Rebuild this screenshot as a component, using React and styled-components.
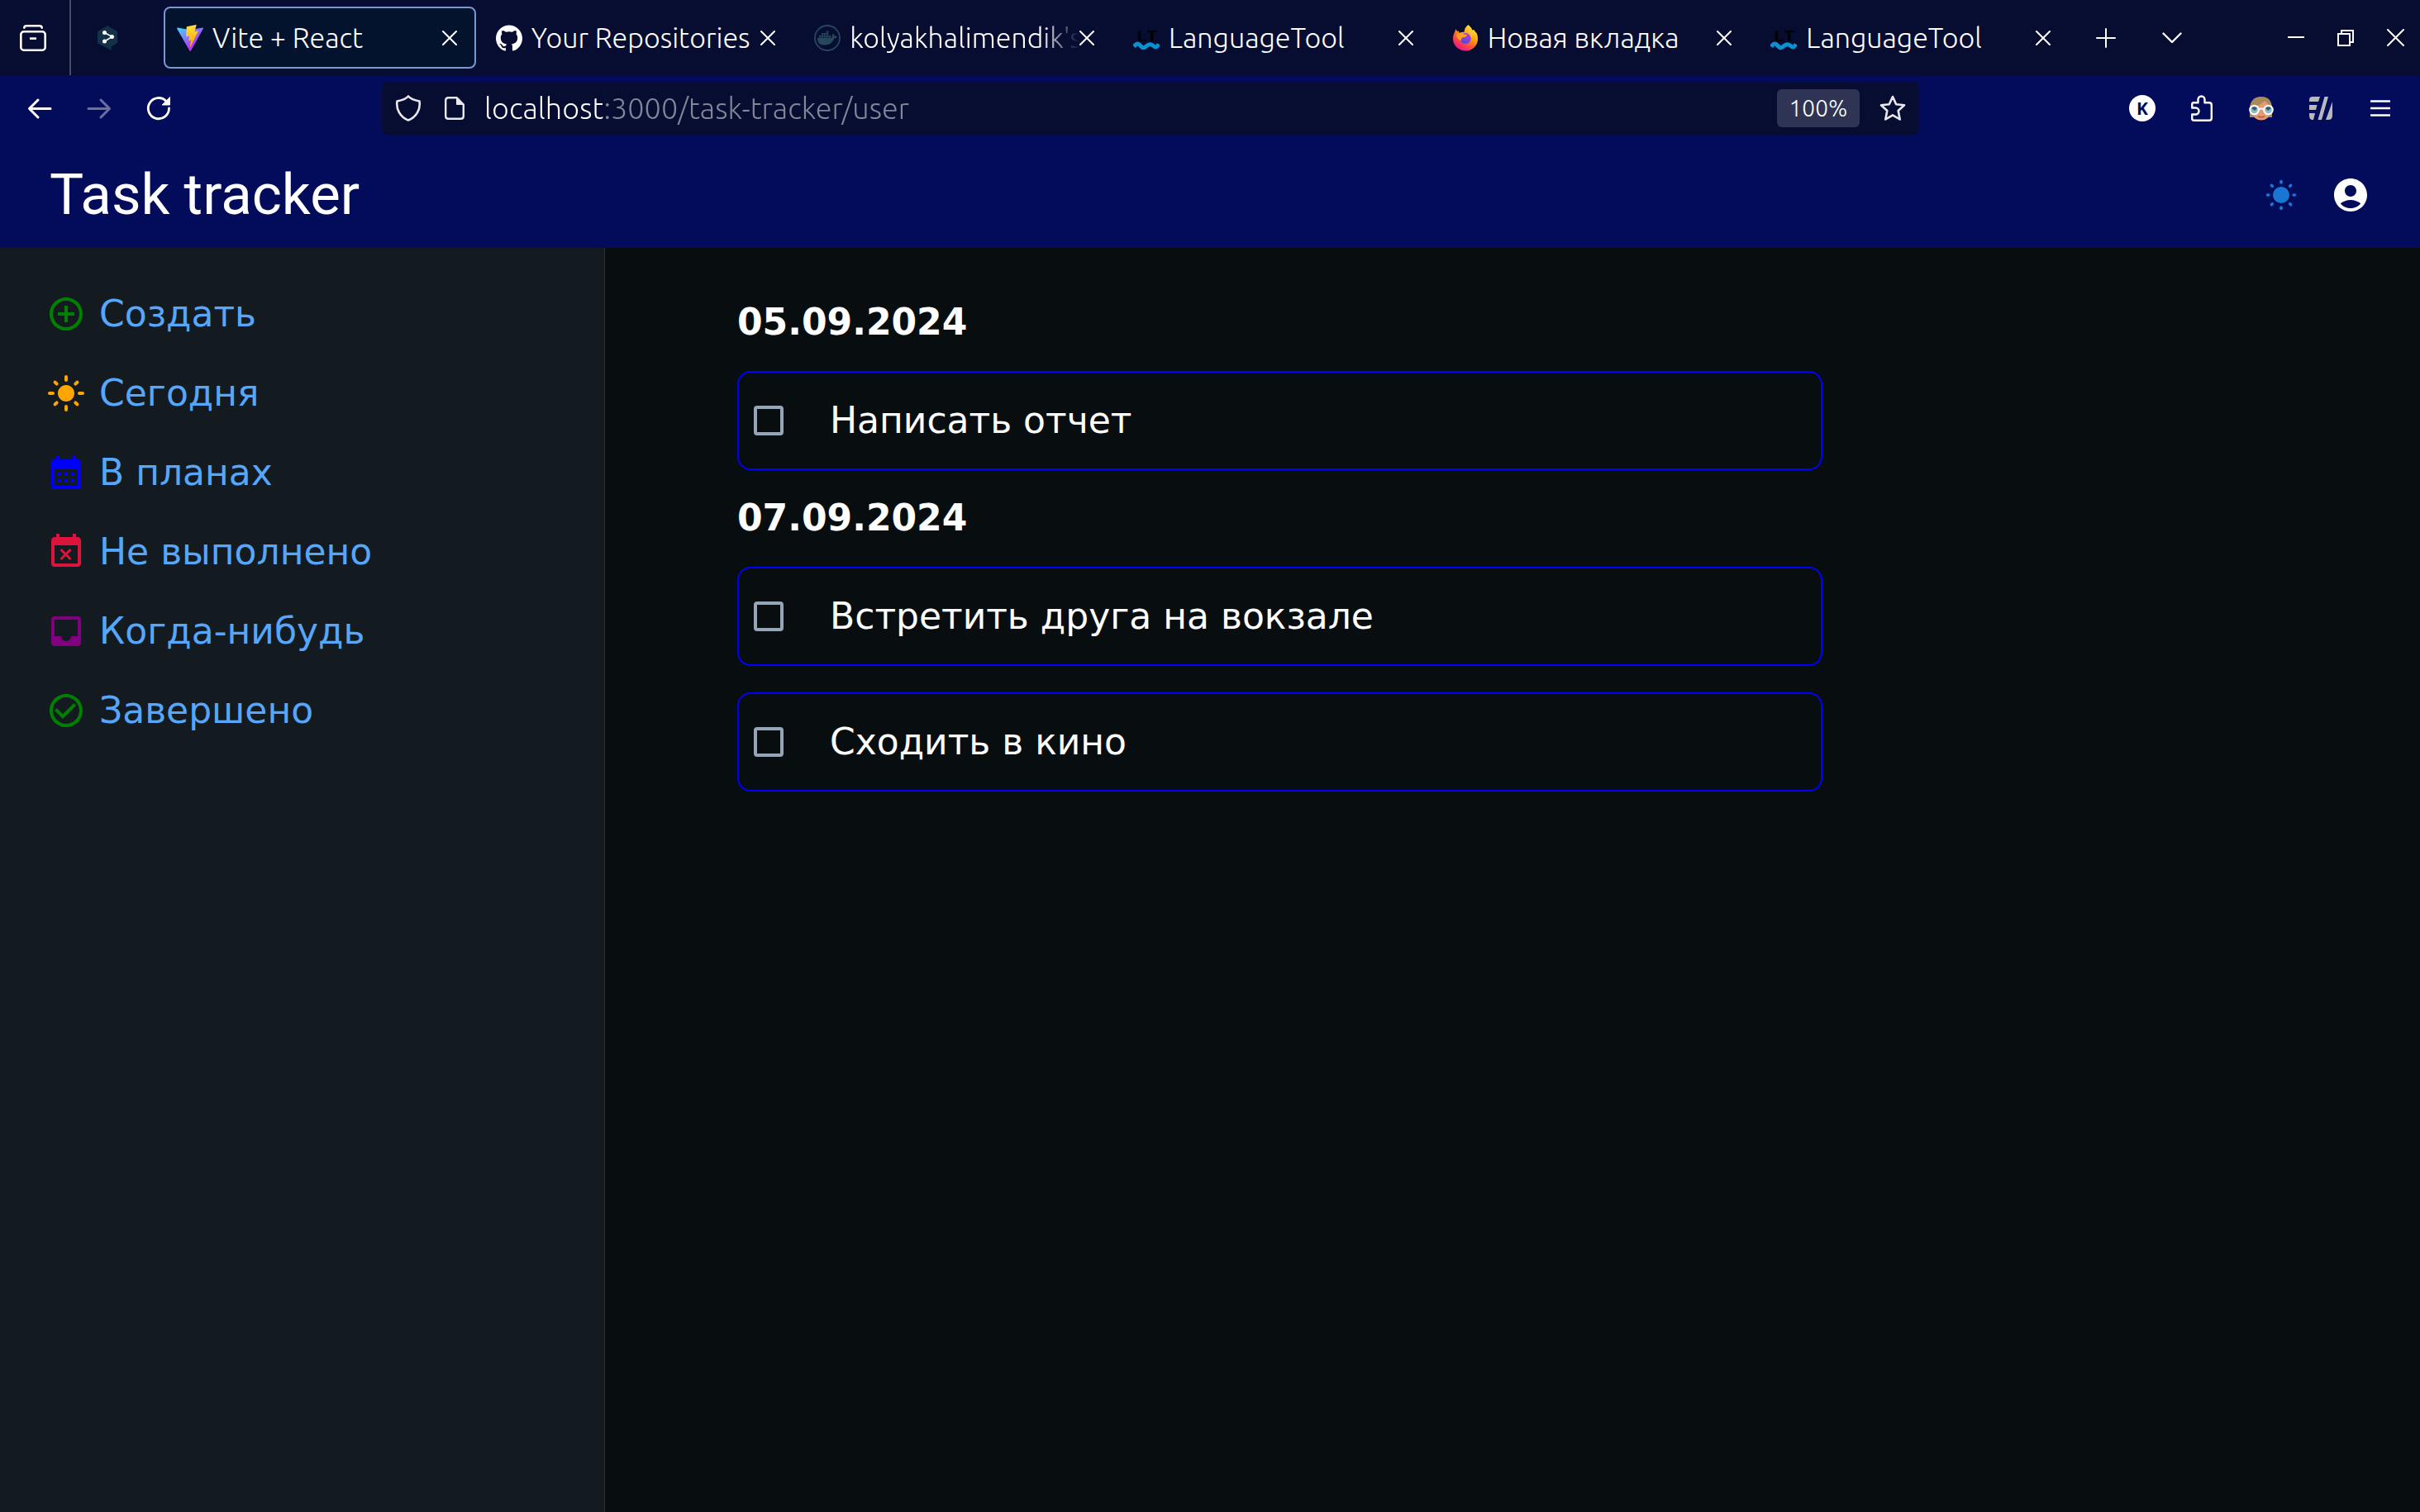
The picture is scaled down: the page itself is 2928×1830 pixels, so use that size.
import React from "react";
import styled, { createGlobalStyle, css } from "styled-components";
import { MdControlPoint, MdLightMode, MdCalendarMonth, MdEventBusy, MdInbox } from "react-icons/md";
import { SiGithub, SiDocker } from "react-icons/si";

const GlobalStyle = createGlobalStyle`
  * { box-sizing: border-box; }
  body {
    margin: 0;
    background: #080e10;
    color: #fff;
    font-family: "DejaVu Sans", sans-serif;
  }
  button, input { font: inherit; color: inherit; }
  svg { display: block; flex: none; }
`;

const chromeFont = css`
  font-family: Ubuntu, "Open Sans", "Noto Sans", sans-serif;
  font-weight: 300;
`;

/* ---------- layout ---------- */

const Page = styled.div`
  min-height: 100vh;
  display: flex;
  flex-direction: column;
`;

const TabStrip = styled.nav`
  ${chromeFont}
  display: flex;
  align-items: center;
  height: 91px;
  background: #070c31;
  font-size: 34px;
`;

const ViewButton = styled.button`
  display: flex;
  align-items: center;
  justify-content: center;
  align-self: stretch;
  width: 86px;
  padding: 0 4px 0 0;
  background: none;
  border: 0;
  border-right: 2px solid #474b68;
`;

const PinnedTab = styled.button`
  display: flex;
  align-items: center;
  justify-content: center;
  width: 88px;
  height: 75px;
  margin-right: 24px;
  padding: 0;
  background: none;
  border: 0;
`;

const TabList = styled.ul`
  flex: 1;
  display: grid;
  grid-template-columns: repeat(6, minmax(0, 1fr));
  gap: 8px;
  margin: 0 4px 0 0;
  padding: 0;
  list-style: none;
`;

const TabItem = styled.li`
  display: flex;
  align-items: center;
  height: 75px;
  padding: 0 21px 0 14px;
  border: 2px solid ${(p) => (p.$active ? "#7797d5" : "transparent")};
  border-radius: 8px;
  background: ${(p) => (p.$active ? "#04132d" : "transparent")};
`;

const TabLink = styled.a`
  flex: 1;
  min-width: 0;
  display: flex;
  align-items: center;
  gap: 11px;
  color: #fff;
  text-decoration: none;
`;

const TabTitle = styled.span`
  flex: 1;
  overflow: hidden;
  padding-bottom: 2px;
  white-space: nowrap;
  line-height: 44px;
  ${(p) => p.$faded && css`mask-image: linear-gradient(to left, transparent, #000 48px);`}
`;

const CloseButton = styled.button`
  padding: 0;
  background: none;
  border: 0;
`;

const StripButton = styled.button`
  display: flex;
  align-items: center;
  justify-content: center;
  width: ${(p) => (p.$wide ? 80 : 60)}px;
  height: 91px;
  padding: 0;
  background: none;
  border: 0;
`;

const WindowControls = styled.div`
  display: flex;
  margin-left: 80px;
`;

const Toolbar = styled.div`
  ${chromeFont}
  display: flex;
  align-items: center;
  height: 81px;
  padding: 0 12px;
  background: #030c5b;
  border-bottom: 1px solid #070c3c;
`;

const ToolButton = styled.button`
  display: flex;
  align-items: center;
  justify-content: center;
  width: 72px;
  height: 64px;
  padding: 0;
  background: none;
  border: 0;
`;

const AddressArea = styled.div`
  flex: 1;
  display: flex;
  justify-content: center;
`;

const AddressBar = styled.form`
  width: 80%;
  max-width: 1860px;
  height: 64px;
  display: flex;
  align-items: center;
  padding: 0 4px;
  border-radius: 8px;
  background: #070c31;
  color: #e8e8ee;
`;

const AddressButton = styled.button`
  display: flex;
  align-items: center;
  justify-content: center;
  width: 56px;
  height: 56px;
  padding: 0;
  background: none;
  border: 0;
`;

const AddressInput = styled.input`
  flex: 1;
  min-width: 0;
  height: 56px;
  margin: 0 8px;
  padding: 0 0 2px;
  border: 0;
  outline: 0;
  font-size: 36px;
  background: linear-gradient(to right, #fff 143px, #838698 143px);
  background-clip: text;
  -webkit-background-clip: text;
  -webkit-text-fill-color: transparent;
`;

const ZoomBadge = styled.button`
  width: 100px;
  height: 46px;
  margin-right: 12px;
  padding: 0;
  border: 0;
  border-radius: 6px;
  background: #303454;
  color: #fff;
  font-size: 28px;
  line-height: 46px;
`;

const AppHeader = styled.header`
  display: flex;
  align-items: center;
  justify-content: space-between;
  height: 128px;
  padding: 0 60px;
  background: #030c5b;
`;

const AppTitle = styled.h1`
  margin: 0;
  font-family: Roboto, sans-serif;
  font-size: 69px;
  font-weight: 400;
  line-height: 80px;
`;

const HeaderActions = styled.div`
  display: flex;
  gap: 36px;
`;

const IconButton = styled.button`
  padding: 0;
  background: none;
  border: 0;
`;

const Body = styled.div`
  flex: 1;
  display: grid;
  grid-template-columns: 1fr 3fr;
`;

const Sidebar = styled.aside`
  padding: 32px 56px;
  background: #141b20;
  border-right: 1px solid #2b3136;
`;

const NavList = styled.ul`
  margin: 0;
  padding: 0;
  list-style: none;
`;

const NavLink = styled.a`
  display: flex;
  align-items: center;
  gap: 16px;
  height: 96px;
  color: #56a7fb;
  font-size: 44px;
  text-decoration: none;
  svg { color: ${(p) => p.$tint}; }
`;

const Label = styled.span`
  padding-bottom: 2px;
`;

const Main = styled.main`
  padding: 64px 160px;
`;

const Groups = styled.div`
  max-width: 1313px;
  display: flex;
  flex-direction: column;
  gap: 32px;
`;

const Group = styled.section`
  display: flex;
  flex-direction: column;
  gap: 32px;
`;

const DateHeading = styled.h2`
  margin: 0;
  padding-bottom: 2px;
  font-size: 44px;
  font-weight: 700;
  line-height: 51px;
`;

const TaskCard = styled.label`
  display: flex;
  align-items: center;
  gap: 56px;
  height: 120px;
  padding: 0 18px;
  border: 2px solid #0000ff;
  border-radius: 16px;
  font-size: 44px;
`;

const Checkbox = styled.input`
  appearance: none;
  flex: none;
  width: 36px;
  height: 36px;
  margin: 0;
  border: 4px solid #94a5b8;
  border-radius: 4px;
`;

/* ---------- drawings ---------- */

const Stroke = ({ w = 32, h = w, box, width = 2, children, ...rest }) => (
  <svg width={w} height={h} viewBox={box || `0 0 ${w} ${h}`} fill="none" stroke="currentColor"
    strokeWidth={width} strokeLinecap="round" strokeLinejoin="round" aria-hidden="true" {...rest}>
    {children}
  </svg>
);

const CrossIcon = ({ size = 18 }) => (
  <Stroke w={size}><path d={`M1 1L${size - 1} ${size - 1}M${size - 1} 1L1 ${size - 1}`} /></Stroke>
);

const ViewIcon = () => (
  <Stroke width={2.6}>
    <rect x="1.3" y="8.3" width="29.4" height="22.4" rx="3.5" />
    <path d="M5.3 3.6Q5.6 1.3 8 1.3H24Q26.4 1.3 26.7 3.6" />
    <path d="M12 16.6H20" strokeLinecap="butt" />
  </Stroke>
);

const HexIcon = () => (
  <svg width="32" height="32" viewBox="0 0 32 32" aria-hidden="true">
    <path fill="#123148" d="M16 1L28 8V22L20.500 26.500V31L15 28L4 22V8Z" />
    <path stroke="#fff" strokeWidth="1.500" fill="none" d="M12.500 9.500L21.500 14.300M12.500 20L21 14.800" />
    <circle cx="12.500" cy="9.500" r="2.500" fill="#fff" />
    <circle cx="21.500" cy="14.500" r="2.500" fill="#fff" />
    <circle cx="12.500" cy="20" r="2.500" fill="#fff" />
  </svg>
);

const ViteIcon = () => (
  <svg width="32" height="32" viewBox="0 0 256 257" aria-hidden="true">
    <defs>
      <linearGradient id="viteBody" x1="-.828%" x2="57.636%" y1="7.652%" y2="78.411%">
        <stop offset="0" stopColor="#41D1FF" /><stop offset="1" stopColor="#BD34FE" />
      </linearGradient>
      <linearGradient id="viteBolt" x1="43.376%" x2="50.316%" y1="2.242%" y2="89.03%">
        <stop offset="0" stopColor="#FFEA83" /><stop offset=".083" stopColor="#FFDD35" /><stop offset="1" stopColor="#FFA800" />
      </linearGradient>
    </defs>
    <path fill="url(#viteBody)" d="M255.153 37.938L134.897 252.976c-2.483 4.44-8.862 4.466-11.382.048L.875 37.958c-2.746-4.814 1.371-10.646 6.827-9.670l120.385 21.517a6.537 6.537 0 0 0 2.322-.004l117.867-21.483c5.438-.991 9.574 4.796 6.877 9.620Z" />
    <path fill="url(#viteBolt)" d="M185.432.063L96.440 17.501a3.268 3.268 0 0 0-2.634 3.014l-5.474 92.456a3.268 3.268 0 0 0 3.997 3.378l24.777-5.718c2.318-.535 4.413 1.507 3.936 3.838l-7.361 36.047c-.495 2.426 1.782 4.500 4.151 3.780l15.304-4.649c2.372-.720 4.652 1.360 4.150 3.788l-11.698 56.621c-.732 3.542 3.979 5.473 5.943 2.437l1.313-2.028l72.516-144.720c1.215-2.423-.880-5.186-3.540-4.672l-25.505 4.922c-2.396.462-4.435-1.770-3.759-4.114l16.646-57.705c.677-2.350-1.370-4.583-3.769-4.113Z" />
  </svg>
);

const DockerIcon = () => (
  <svg width="32" height="32" viewBox="0 0 32 32" color="#27485c" aria-hidden="true">
    <circle cx="16" cy="16" r="15" fill="none" stroke="currentColor" strokeWidth="1.800" />
    <g transform="translate(4 4)"><SiDocker size={24} /></g>
  </svg>
);

const WaveIcon = () => (
  <svg width="32" height="32" viewBox="0 0 32 32" aria-hidden="true">
    <text x="4" y="20" fontFamily="Liberation Mono, monospace" fontWeight="700" fontSize="21" fill="#000">LT</text>
    <path d="M1 26.500C4 22 6 22 9 25.500S14 28 16.500 25.500S22 23 24.500 25.500S29 27 31 23.500" fill="none" stroke="#0a92d0" strokeWidth="5" />
  </svg>
);

const FirefoxIcon = () => (
  <svg width="32" height="32" viewBox="0 0 32 32" aria-hidden="true">
    <defs>
      <linearGradient id="foxBody" x1=".8" y1=".1" x2=".25" y2=".95">
        <stop offset="0" stopColor="#ffe43b" /><stop offset=".4" stopColor="#ff980e" />
        <stop offset=".7" stopColor="#ff4a44" /><stop offset="1" stopColor="#e9148b" />
      </linearGradient>
      <linearGradient id="foxGlobe" x1=".7" y1="0" x2=".3" y2="1">
        <stop offset="0" stopColor="#b33bf0" /><stop offset="1" stopColor="#5a47cf" />
      </linearGradient>
    </defs>
    <path fill="url(#foxBody)" d="M19.500 0C22 2 23.500 4.500 24.500 6.500L26.500 6Q27 8 29.500 10Q31.500 14 31 18C30.500 26 24 31.500 16 31.500S1 25 1 17Q1 12 3 9L4.500 5L6 8L8 7.500L8.500 10Q11 8.500 14.500 8.800Q15 3 19.500 0Z" />
    <circle cx="16" cy="16.500" r="6.600" fill="url(#foxGlobe)" />
    <path fill="#ffa01e" d="M5 12Q9 9 12.500 10.500Q15 12 18 12.200Q17 15 13.500 15.300Q10.500 15.500 11 19Q6 18 5 12Z" />
    <path fill="#ffc43a" d="M18 8Q23.500 10 23.500 16Q25.500 12 24 8L20.500 4Z" />
  </svg>
);

const LetterIcon = () => (
  <svg width="32" height="32" viewBox="0 0 32 32" aria-hidden="true">
    <circle cx="16" cy="16" r="16" fill="#fff" />
    <text x="16" y="24" textAnchor="middle" fontFamily="Open Sans, sans-serif" fontWeight="700" fontSize="21" fill="#030c5b">K</text>
  </svg>
);

const FaceIcon = () => (
  <svg width="32" height="32" viewBox="0 0 32 32" aria-hidden="true">
    <path fill="#a98a5c" d="M16 2C7 2 2 8 2 16V27H8L24 27H29V16C29 8 25 2 16 2Z" />
    <path fill="#e39b73" d="M5 16Q14 13 20 7Q25 10 26.500 16V20Q26 30 16 30.500Q6 30 5 20Z" />
    <path d="M12 26Q16 27.500 20 26" stroke="#b0573c" strokeWidth="1.500" fill="none" />
    <circle cx="7.500" cy="18" r="5.300" fill="#8cbcc4" stroke="#fff" strokeWidth="2" />
    <circle cx="24.500" cy="18" r="5.300" fill="#8cbcc4" stroke="#fff" strokeWidth="2" />
    <path d="M4 16Q7.500 12.500 11 16L8 19ZM21 16Q24.500 12.500 28 16L24 19Z" fill="#3c5a62" />
    <path d="M12.500 17.300Q16 15.500 19.500 17.300" stroke="#fff" strokeWidth="2" fill="none" />
  </svg>
);

const SlashIcon = () => (
  <svg width="28" height="28" viewBox="0 0 28 28" fill="#b9b9b9" aria-hidden="true">
    <path d="M4 0H13L11 6H0V4Q0 0 4 0ZM0 10H9.500L8 16H0ZM0 20H7L5 28H3Q0 27 0 23ZM18.500 0H23L15 28H10.500ZM28 6V23Q28 28 23 28H20Z" />
  </svg>
);

const SunIcon = () => (
  <svg width="48" height="48" viewBox="-24 -24 48 48" fill="#1976d2" aria-hidden="true">
    <circle r="10" />
    {[0, 45, 90, 135, 180, 225, 270, 315].map((a) => (
      <rect key={a} x="-1.800" y="-18.300" width="3.600" height="5" rx="1.800" transform={`rotate(${a})`} />
    ))}
  </svg>
);

const UserIcon = () => (
  <svg width="48" height="48" viewBox="0 0 24 24" fill="#fff" aria-hidden="true">
    <path d="M12 2C6.480 2 2 6.480 2 12s4.480 10 10 10 10-4.480 10-10S17.520 2 12 2zm0 4c1.930 0 3.500 1.570 3.500 3.500S13.930 13 12 13s-3.500-1.570-3.500-3.500S10.070 6 12 6zm0 14c-2.030 0-4.430-.820-6.140-2.880C7.550 15.800 9.680 15 12 15s4.450.8 6.140 2.120C16.430 19.180 14.030 20 12 20z" />
  </svg>
);

const DoneIcon = () => (
  <svg width="48" height="48" viewBox="0 0 24 24" fill="currentColor" aria-hidden="true">
    <path d="M16.590 7.580L10 14.170l-3.590-3.580L5 12l5 5 8-8zM12 2C6.480 2 2 6.480 2 12s4.480 10 10 10 10-4.480 10-10S17.520 2 12 2zm0 18c-4.420 0-8-3.580-8-8s3.580-8 8-8 8 3.580 8 8-3.580 8-8 8z" />
  </svg>
);

const ArrowIcon = ({ flipped, dim }) => (
  <Stroke width={3} color={dim ? "#6b6fa0" : "#fff"} transform={flipped ? "scale(-1 1)" : undefined}>
    <path d="M29 16.500H4M14 6L3.500 16.500L14 27" />
  </Stroke>
);

const ReloadIcon = () => (
  <Stroke width={2.8}>
    <path d="M28.500 16A12.600 12.600 0 1 1 25 7.400" />
    <path d="M29.500 3V12H20.500Z" fill="currentColor" strokeWidth="1" />
  </Stroke>
);

const ShieldIcon = () => (
  <Stroke width={2.6}><path d="M16 1.500C19 5 24 6.500 29.500 7.500C31 17 26 26.500 16 30.500C6 26.500 1 17 2.500 7.500C8 6.500 13 5 16 1.500Z" /></Stroke>
);

const DocumentIcon = () => (
  <Stroke w={24} h={28} width={2.4}>
    <path d="M4.500 1.200H14.500L22.800 9.500V23.500Q22.800 26.800 19.500 26.800H4.500Q1.200 26.800 1.200 23.500V4.500Q1.200 1.200 4.500 1.200Z" />
    <path d="M14.500 1.200V9.500H22.800Z" fill="currentColor" strokeWidth="1" />
  </Stroke>
);

const StarIcon = () => (
  <Stroke width={2.6}><path d="M16 2L20.200 11.200L30 12.300L22.700 19L24.700 29.500L16 24.300L7.300 29.500L9.300 19L2 12.300L11.800 11.200Z" /></Stroke>
);

const PuzzleIcon = () => (
  <Stroke w={28} h={32} width={2.4}>
    <path d="M4 9.200H9.500V5.500A4 4 0 0 1 17.500 5.500V9.200H23Q25.800 9.200 25.800 12V28Q25.800 30.800 23 30.800H4.500Q2.200 30.800 2.200 28.500V23.500H6.500A4 4 0 0 0 6.500 15.500H2.200V11.500Q2.200 9.200 4 9.200Z" />
  </Stroke>
);

/* ---------- data ---------- */

const tabs = [
  { id: "vite", title: "Vite + React", icon: <ViteIcon />, active: true },
  { id: "github", title: "Your Repositories", icon: <SiGithub size={32} /> },
  { id: "docker", title: "kolyakhalimendik's", icon: <DockerIcon />, faded: true },
  { id: "lt1", title: "LanguageTool", icon: <WaveIcon /> },
  { id: "new", title: "Новая вкладка", icon: <FirefoxIcon /> },
  { id: "lt2", title: "LanguageTool", icon: <WaveIcon /> },
];

const links = [
  { title: "Создать", icon: <MdControlPoint size={48} />, tint: "green" },
  { title: "Сегодня", icon: <MdLightMode size={48} />, tint: "orange" },
  { title: "В планах", icon: <MdCalendarMonth size={48} />, tint: "blue" },
  { title: "Не выполнено", icon: <MdEventBusy size={48} />, tint: "crimson" },
  { title: "Когда-нибудь", icon: <MdInbox size={48} />, tint: "purple" },
  { title: "Завершено", icon: <DoneIcon />, tint: "green" },
];

const groups = [
  { date: "05.09.2024", tasks: ["Написать отчет"] },
  { date: "07.09.2024", tasks: ["Встретить друга на вокзале", "Сходить в кино"] },
];

export default function App() {
  return (
    <Page>
      <GlobalStyle />
      <TabStrip>
        <ViewButton aria-label="View"><ViewIcon /></ViewButton>
        <PinnedTab aria-label="Pinned tab"><HexIcon /></PinnedTab>
        <TabList>
          {tabs.map((tab) => (
            <TabItem key={tab.id} $active={tab.active}>
              <TabLink href="#">
                {tab.icon}
                <TabTitle $faded={tab.faded}>{tab.title}</TabTitle>
              </TabLink>
              <CloseButton aria-label="Close tab"><CrossIcon /></CloseButton>
            </TabItem>
          ))}
        </TabList>
        <StripButton $wide aria-label="New tab">
          <Stroke w={24}><path d="M12 1V23M1 12H23" /></Stroke>
        </StripButton>
        <StripButton $wide aria-label="List tabs">
          <Stroke w={24} h={14} width={2.4}><path d="M1.500 1.500L12 12L22.500 1.500" /></Stroke>
        </StripButton>
        <WindowControls>
          <StripButton aria-label="Minimize"><Stroke w={20} strokeLinecap="butt"><path d="M0 9H20" /></Stroke></StripButton>
          <StripButton aria-label="Restore">
            <Stroke w={20} strokeLinejoin="miter"><path d="M1 5H15V19H1ZM5 5V1H19V15H15" /></Stroke>
          </StripButton>
          <StripButton aria-label="Close"><CrossIcon size={21} /></StripButton>
        </WindowControls>
      </TabStrip>

      <Toolbar>
        <ToolButton aria-label="Back"><ArrowIcon /></ToolButton>
        <ToolButton aria-label="Forward"><ArrowIcon flipped dim /></ToolButton>
        <ToolButton aria-label="Reload"><ReloadIcon /></ToolButton>
        <AddressArea>
          <AddressBar>
            <AddressButton type="button" aria-label="Protection"><ShieldIcon /></AddressButton>
            <AddressButton type="button" aria-label="Page info"><DocumentIcon /></AddressButton>
            <AddressInput aria-label="Address" defaultValue="localhost:3000/task-tracker/user" />
            <ZoomBadge type="button">100%</ZoomBadge>
            <AddressButton type="button" aria-label="Bookmark"><StarIcon /></AddressButton>
          </AddressBar>
        </AddressArea>
        <ToolButton aria-label="Account"><LetterIcon /></ToolButton>
        <ToolButton aria-label="Extensions"><PuzzleIcon /></ToolButton>
        <ToolButton aria-label="Reader extension"><FaceIcon /></ToolButton>
        <ToolButton aria-label="Colour extension"><SlashIcon /></ToolButton>
        <ToolButton aria-label="Menu">
          <Stroke w={24} h={20} width={2.6}><path d="M1 1.500H23M1 10H23M1 18.500H23" /></Stroke>
        </ToolButton>
      </Toolbar>

      <AppHeader>
        <AppTitle>Task tracker</AppTitle>
        <HeaderActions>
          <IconButton aria-label="Theme"><SunIcon /></IconButton>
          <IconButton aria-label="Profile"><UserIcon /></IconButton>
        </HeaderActions>
      </AppHeader>

      <Body>
        <Sidebar>
          <NavList>
            {links.map((link) => (
              <li key={link.title}>
                <NavLink href="#" $tint={link.tint}>{link.icon}<Label>{link.title}</Label></NavLink>
              </li>
            ))}
          </NavList>
        </Sidebar>
        <Main>
          <Groups>
            {groups.map((group) => (
              <Group key={group.date}>
                <DateHeading>{group.date}</DateHeading>
                {group.tasks.map((task) => (
                  <TaskCard key={task}><Checkbox type="checkbox" /><Label>{task}</Label></TaskCard>
                ))}
              </Group>
            ))}
          </Groups>
        </Main>
      </Body>
    </Page>
  );
}
